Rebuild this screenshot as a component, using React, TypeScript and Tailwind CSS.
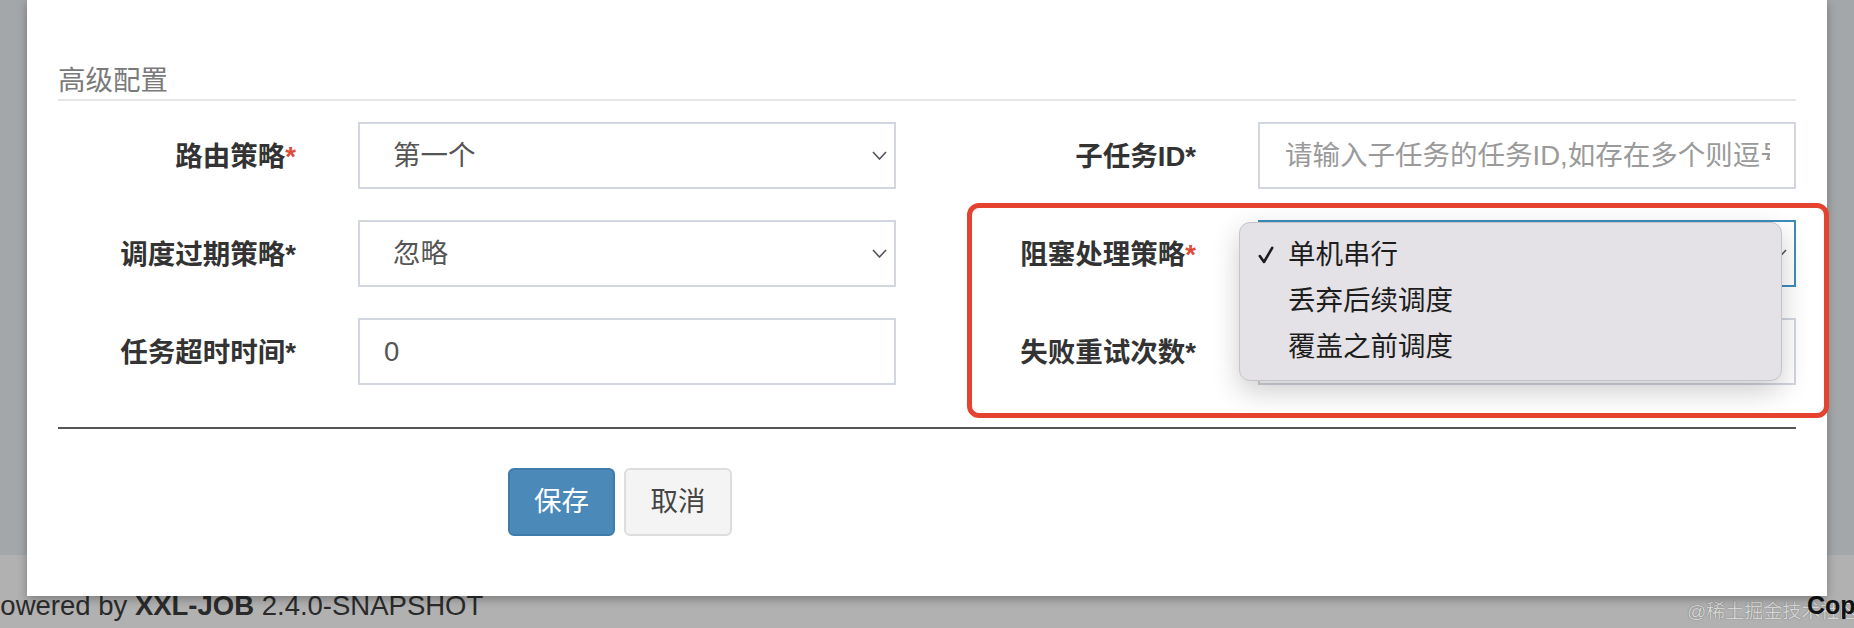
import React from "react";

function Chevron() {
  return (
    <svg width="15" height="9" viewBox="0 0 15 9" className="shrink-0">
      <polyline points="1,1 7.5,8 14,1" fill="none" stroke="#555" strokeWidth="1.6" />
    </svg>
  );
}

function Check() {
  return (
    <svg width="16" height="18" viewBox="0 0 16 18">
      <path d="M1.8 10 L6 16 L14.2 1.8" fill="none" stroke="#1d1d1d" strokeWidth="2.6" strokeLinecap="round" strokeLinejoin="round" />
    </svg>
  );
}

function Label({ text, red = false }: { text: string; red?: boolean }) {
  return (
    <div className="col-span-2 px-[31px] pt-[3px] flex items-center justify-end font-bold text-[#333] whitespace-nowrap">
      {text}
      <span className={red ? "text-[#dd4b39]" : "text-[#333]"}>*</span>
    </div>
  );
}

function SelectBox({ value }: { value: string }) {
  return (
    <div className="col-span-4 px-[31px]">
      <div className="h-[67px] border-2 border-[#d2d6de] bg-white flex items-center justify-between pl-[33px] pr-[7px] text-[#555]">
        <span>{value}</span>
        <Chevron />
      </div>
    </div>
  );
}

function TextBox({ value, placeholder }: { value?: string; placeholder?: string }) {
  return (
    <div className="col-span-4 px-[31px]">
      <div className="h-[67px] border-2 border-[#d2d6de] bg-white flex items-center px-[24px] overflow-hidden whitespace-nowrap">
        {value ? (
          <span className="text-[#555]">{value}</span>
        ) : (
          <span className="text-[#9a9a9a] pl-[1px] overflow-hidden">{placeholder}</span>
        )}
      </div>
    </div>
  );
}

const options = ["单机串行", "丢弃后续调度", "覆盖之前调度"];

function BlockSelect() {
  return (
    <div className="col-span-4 px-[31px]">
      <div className="relative h-[67px] border-2 border-[#3c8dbc] bg-white flex items-center justify-end pr-[7px]">
        <Chevron />
        {/* native select menu */}
        <div className="absolute left-[-21px] top-0 w-[543px] h-[159px] rounded-[11px] bg-[#e4e2e6] border border-[#c6c4c8] shadow-[0_10px_28px_rgba(0,0,0,0.2)] pt-[9px] z-10">
          {options.map((o, i) => (
            <div key={o} className="h-[46px] flex items-center text-[#1d1d1d]">
              <span className="w-[48px] pl-[18px] flex items-center">{i === 0 ? <Check /> : null}</span>
              <span>{o}</span>
            </div>
          ))}
        </div>
      </div>
    </div>
  );
}

export default function App() {
  return (
    <div className="relative w-[1854px] h-[628px] overflow-hidden flex flex-col bg-[#a4a7aa] font-['Liberation_Sans','Noto_Sans_CJK_SC',sans-serif] text-[27.5px]">
      <div className="flex-1" />

      {/* page footer under the backdrop */}
      <footer className="relative h-[73px] shrink-0 bg-[#b1b1b1] flex pt-[35px] leading-[32px] text-[#2a2a2a] whitespace-nowrap">
        <div className="-ml-[18px] w-[1825px] shrink-0">
          Powered by <b>XXL-JOB</b> 2.4.0-SNAPSHOT
        </div>
        <div className="relative z-[5] shrink-0 -mt-[1px] font-bold text-[25px] text-[#111]">
          Copyright © 2015-2023 xuxueli
        </div>
        <div className="absolute left-[1687px] top-[45px] text-[19px] leading-[24px] text-[#d6d6d6] [text-shadow:0_0_1px_rgba(0,0,0,0.5)] z-[1]">
          @稀土掘金技术社区
        </div>
      </footer>

      {/* modal */}
      <div className="absolute left-[27px] top-0 w-[1800px] h-[596px] bg-white px-[31px] pt-[59px] shadow-[0_3px_9px_rgba(0,0,0,0.3)] z-10">
        <div className="pt-[3px] leading-[37px] text-[#7a7a7a] border-b-2 border-[#e5e5e5]">高级配置</div>

        <div className="mt-[21px] flex flex-col gap-[31px] leading-[40px]">
          <div className="grid grid-cols-12 -mx-[31px]">
            <Label text="路由策略" red />
            <SelectBox value="第一个" />
            <Label text="子任务ID" />
            <TextBox placeholder="请输入子任务的任务ID,如存在多个则逗号分隔" />
          </div>
          <div className="grid grid-cols-12 -mx-[31px]">
            <Label text="调度过期策略" />
            <SelectBox value="忽略" />
            <Label text="阻塞处理策略" red />
            <BlockSelect />
          </div>
          <div className="grid grid-cols-12 -mx-[31px]">
            <Label text="任务超时时间" />
            <TextBox value="0" />
            <Label text="失败重试次数" />
            <TextBox value="0" />
          </div>
        </div>

        <div className="mt-[42px] border-t-2 border-[#555]" />

        <div className="grid grid-cols-12 -mx-[31px] mt-[39px]">
          <div className="col-start-4 col-span-9 px-[31px] flex gap-[9px]">
            <button className="h-[68px] w-[107px] rounded-[6px] bg-[#4a89b8] border-2 border-[#3f7cab] text-white">保存</button>
            <button className="h-[68px] w-[108px] rounded-[6px] bg-[#f4f4f4] border-2 border-[#dddddd] text-[#444]">取消</button>
          </div>
        </div>
      </div>

      {/* annotation frame */}
      <div className="absolute left-[967px] top-[203px] w-[862px] h-[215px] border-[5px] border-[#e5432f] rounded-[12px] z-20" />
    </div>
  );
}
